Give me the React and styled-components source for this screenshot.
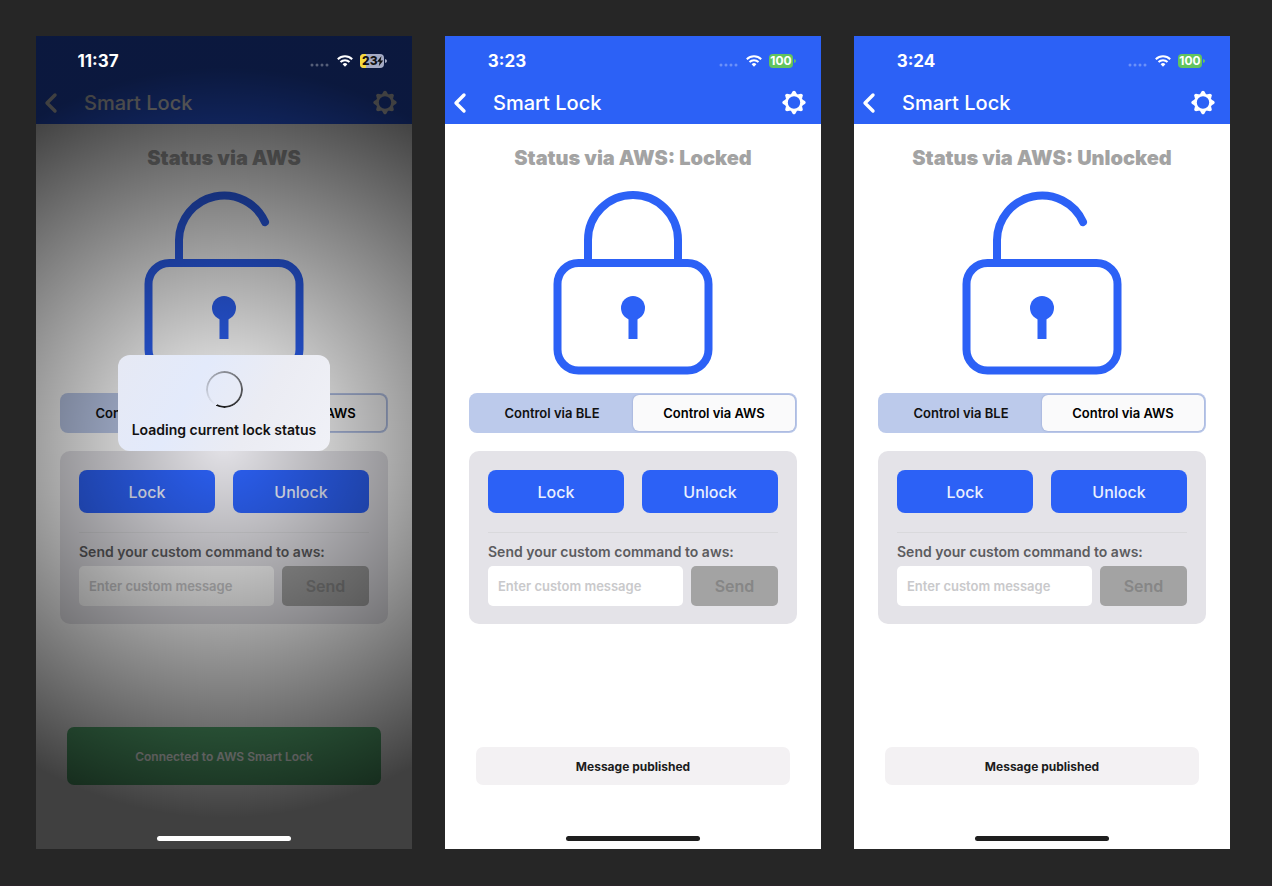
import styled, { createGlobalStyle, css } from "styled-components";

const GlobalStyle = createGlobalStyle`
  * {
    box-sizing: border-box;
  }

  body {
    margin: 0;
    background-color: #262626;
    font-family: Inter, "Liberation Sans", sans-serif;
  }

  button,
  input {
    font-family: inherit;
    margin: 0;
  }
`;

const Board = styled.main`
  display: grid;
  grid-template-columns: repeat(3, minmax(0, 1fr));
  gap: 33px;
  min-height: 100vh;
  padding: 36px 42px 36px 36px;
  border-bottom: 1px solid #2b2429;
`;

const Phone = styled.section`
  position: relative;
  display: flex;
  flex-direction: column;
  overflow: hidden;
  background-color: #fff;
`;

const Header = styled.header`
  background-color: #2c61f6;
  color: #fff;
`;

const StatusBar = styled.div`
  position: relative;
  z-index: 2;
  display: flex;
  align-items: center;
  justify-content: space-between;
  height: 46px;
  padding: 4px 25px 0 0;
`;

const Time = styled.time`
  width: 124px;
  font-size: 17px;
  font-weight: 700;
  text-align: center;
`;

const StatusIcons = styled.div`
  display: flex;
  align-items: center;
  gap: 7px;
`;

const SignalDots = styled.svg`
  width: 20px;
  height: 12px;
  opacity: 0.3;
`;

const WifiIcon = styled.svg`
  width: 16px;
  height: 12px;
`;

const BatteryIcon = styled.svg`
  width: 27px;
  height: 14px;
`;

const NavBar = styled.div`
  display: flex;
  align-items: center;
  height: 42px;
  padding: 0 14px 0 5px;
`;

const IconButton = styled.button`
  display: flex;
  padding: 0;
  border: 0;
  background: none;
  color: inherit;
`;

const NavTitle = styled.h1`
  flex: 1;
  margin: 0;
  padding-left: 23px;
  font-size: 20px;
  font-weight: 500;
  line-height: 24px;
`;

const Content = styled.div`
  display: flex;
  flex: 1;
  flex-direction: column;
  padding: 22px 24px 8px;
`;

const StatusTitle = styled.h2`
  margin: 0 0 21px;
  color: #a3a3a3;
  font-size: 20px;
  font-weight: 900;
  line-height: 24px;
  text-align: center;
`;

const LockDrawing = styled.svg`
  align-self: center;
  width: 160px;
  height: 184px;
  margin-bottom: 18px;
`;

const Segments = styled.div`
  display: grid;
  grid-template-columns: 1fr 1fr;
  height: 40px;
  margin-bottom: 18px;
  padding: 2px;
  border-radius: 8px;
  background-color: #bccaeb;
`;

const Segment = styled.button`
  padding: 0;
  border: 0;
  border-radius: 6px;
  background: none;
  color: #111;
  font-size: 13px;
  font-weight: 600;

  ${(props) =>
    props.$active &&
    css`
      background-color: #fafafb;
      box-shadow: 0 0 2px rgba(60, 80, 150, 0.4);
      color: #000;
    `}
`;

const Panel = styled.form`
  padding: 19px 19px 18px;
  border-radius: 10px;
  background-color: #e4e3e8;
`;

const LockButtons = styled.div`
  display: grid;
  grid-template-columns: 1fr 1fr;
  gap: 18px;
  padding-bottom: 19px;
  border-bottom: 1px solid #d9d9dc;
`;

const ActionButton = styled.button`
  height: 43px;
  padding: 0;
  border: 0;
  border-radius: 8px;
  background-color: #2c61f6;
  color: #e9effe;
  font-size: 16px;
  font-weight: 500;
`;

const CommandLabel = styled.label`
  display: block;
  padding: 9px 0 5px;
  color: #5c5c5f;
  font-size: 14px;
  font-weight: 600;
  line-height: 19px;
`;

const CommandRow = styled.div`
  display: flex;
  gap: 8px;
`;

const CommandInput = styled.input`
  flex: 1;
  min-width: 0;
  height: 40px;
  padding: 0 10px;
  border: 0;
  border-radius: 5px;
  background-color: #fff;
  font-size: 13px;
  font-weight: 600;

  &::placeholder {
    color: #c9c9cb;
    opacity: 1;
  }
`;

const SendButton = styled.button`
  width: 87px;
  height: 40px;
  padding: 0;
  border: 0;
  border-radius: 5px;
  background-color: #a3a3a3;
  color: #868686;
  font-size: 16px;
  font-weight: 600;
`;

const Toast = styled.div`
  display: flex;
  align-items: center;
  justify-content: center;
  height: ${(props) => (props.$connected ? "58px" : "38px")};
  margin: auto 7px 51px;
  border-radius: 7px;
  background-color: ${(props) => (props.$connected ? "#5bb578" : "#f3f1f3")};
  color: ${(props) => (props.$connected ? "#fff" : "#1c1c1c")};
  font-size: 12px;
  font-weight: ${(props) => (props.$connected ? 600 : 700)};
`;

const HomeIndicator = styled.div`
  position: relative;
  z-index: 2;
  align-self: center;
  width: 134px;
  height: 5px;
  border-radius: 3px;
  background-color: ${(props) => (props.$light ? "#fff" : "#1e1e1e")};
`;

const Overlay = styled.div`
  position: absolute;
  inset: 0;
  z-index: 1;
  display: flex;
  align-items: center;
  justify-content: center;
  padding-bottom: 79px;
  background: radial-gradient(
    circle 375px at center,
    rgba(0, 0, 0, 0),
    rgba(0, 0, 0, 0.75)
  );
`;

const Hud = styled.div`
  display: flex;
  flex-direction: column;
  align-items: center;
  justify-content: space-between;
  width: 212px;
  height: 96px;
  padding: 16px 0 11px;
  border-radius: 12px;
  background: linear-gradient(120deg, #e6e9f4, #e3eafb 35%, #ebecf3 65%, #f0f1f7);
  color: #111;
  font-size: 14px;
  font-weight: 600;
  line-height: 20px;
  white-space: nowrap;
`;

const Spinner = styled.div`
  width: 37px;
  height: 37px;
  border-radius: 50%;
  background: conic-gradient(from 208deg, rgba(0, 0, 0, 0), #111);
  mask: radial-gradient(circle, transparent 16px, #000 17px);
`;

const Battery = ({ level, charging }) => (
  <BatteryIcon viewBox="0 0 27 14" aria-label={`Battery ${level}`}>
    {charging ? (
      <>
        <rect width="24" height="14" rx="4" fill="#a5abc4" />
        <path d="M4 0h2v14H4a4 4 0 0 1-4-4V4a4 4 0 0 1 4-4z" fill="#f6d93c" />
        <path d="M25 5q2 .5 2 2t-2 2z" fill="#a5abc4" />
        <text x="2" y="11" fontSize="12" fontWeight="800" fill="#111">
          {level}
        </text>
        <path d="M21.5 2 17 7.8h2.6l-.8 4.4 4.4-5.8h-2.6z" fill="#111" />
      </>
    ) : (
      <>
        <rect width="24" height="14" rx="4" fill="#62c45e" />
        <path d="M25 5q2 .5 2 2t-2 2z" fill="#62c45e" />
        <text
          x="12"
          y="11"
          fontSize="12"
          fontWeight="700"
          fill="#fff"
          textAnchor="middle"
        >
          {level}
        </text>
      </>
    )}
  </BatteryIcon>
);

const Wifi = () => (
  <WifiIcon viewBox="0 0 16 12" fill="none" stroke="#fff" strokeWidth="2">
    <path d="M.8 4.2a10.2 10.2 0 0 1 14.4 0" />
    <path d="M3.5 7a6.4 6.4 0 0 1 9 0" />
    <path d="M5.6 9.2a3.4 3.4 0 0 1 4.8 0L8 11.8z" fill="#fff" stroke="none" />
  </WifiIcon>
);

const BackIcon = () => (
  <svg width="20" height="22" viewBox="0 0 20 22" fill="none">
    <path
      d="M14 3 6 11l8 8"
      stroke="currentColor"
      strokeWidth="3.4"
      strokeLinecap="round"
      strokeLinejoin="round"
    />
  </svg>
);

const TEETH = [0, 45, 90, 135, 180, 225, 270, 315];

const GearIcon = () => (
  <svg width="26" height="26" viewBox="-13 -12.5 26 26">
    <circle r="7.6" fill="none" stroke="currentColor" strokeWidth="2.8" />
    {TEETH.map((angle) => (
      <path
        key={angle}
        d="M-3.2-8 -1.3-11.2Q0-12.3 1.3-11.2L3.2-8z"
        fill="currentColor"
        transform={`rotate(${angle})`}
      />
    ))}
  </svg>
);

const Padlock = ({ locked }) => (
  <LockDrawing
    viewBox="0 0 160 184"
    fill="none"
    stroke="#2c61f6"
    strokeWidth="8"
    strokeLinecap="round"
  >
    {locked ? (
      <path d="M35 70V49a45 45 0 0 1 90 0v21" />
    ) : (
      <path d="M35 70V49A45 45 0 0 1 121 31" />
    )}
    <rect x="4.5" y="72" width="151" height="107.5" rx="21" />
    <circle cx="80" cy="117" r="12" fill="#2c61f6" stroke="none" />
    <path d="M75.5 120h9v28h-9z" fill="#2c61f6" stroke="none" />
  </LockDrawing>
);

const LockScreen = ({
  id,
  time,
  battery,
  charging,
  status,
  locked,
  toast,
  connected,
  loading,
}) => (
  <Phone>
    <Header>
      <StatusBar>
        <Time>{time}</Time>
        <StatusIcons>
          <SignalDots viewBox="0 0 20 12" fill="#fff">
            <circle cx="2" cy="10" r="1.5" />
            <circle cx="7" cy="10" r="1.5" />
            <circle cx="12" cy="10" r="1.5" />
            <circle cx="17" cy="10" r="1.5" />
          </SignalDots>
          <Wifi />
          <Battery level={battery} charging={charging} />
        </StatusIcons>
      </StatusBar>
      <NavBar>
        <IconButton type="button" aria-label="Back">
          <BackIcon />
        </IconButton>
        <NavTitle>Smart Lock</NavTitle>
        <IconButton type="button" aria-label="Settings">
          <GearIcon />
        </IconButton>
      </NavBar>
    </Header>
    <Content>
      <StatusTitle>{status}</StatusTitle>
      <Padlock locked={locked} />
      <Segments>
        <Segment type="button" aria-pressed="false">
          Control via BLE
        </Segment>
        <Segment type="button" aria-pressed="true" $active>
          Control via AWS
        </Segment>
      </Segments>
      <Panel onSubmit={(e) => e.preventDefault()}>
        <LockButtons>
          <ActionButton type="button">Lock</ActionButton>
          <ActionButton type="button">Unlock</ActionButton>
        </LockButtons>
        <CommandLabel htmlFor={`command-${id}`}>
          Send your custom command to aws:
        </CommandLabel>
        <CommandRow>
          <CommandInput
            id={`command-${id}`}
            type="text"
            placeholder="Enter custom message"
          />
          <SendButton type="submit" disabled>
            Send
          </SendButton>
        </CommandRow>
      </Panel>
      <Toast role="status" $connected={connected}>
        {toast}
      </Toast>
      <HomeIndicator $light={loading} />
    </Content>
    {loading ? (
      <Overlay>
        <Hud>
          <Spinner />
          Loading current lock status
        </Hud>
      </Overlay>
    ) : null}
  </Phone>
);

const screens = [
  {
    id: "loading",
    time: "11:37",
    battery: "23",
    charging: true,
    status: "Status via AWS",
    locked: false,
    toast: "Connected to AWS Smart Lock",
    connected: true,
    loading: true,
  },
  {
    id: "locked",
    time: "3:23",
    battery: "100",
    status: "Status via AWS: Locked",
    locked: true,
    toast: "Message published",
  },
  {
    id: "unlocked",
    time: "3:24",
    battery: "100",
    status: "Status via AWS: Unlocked",
    locked: false,
    toast: "Message published",
  },
];

const App = () => (
  <>
    <GlobalStyle />
    <Board>
      {screens.map((screen) => (
        <LockScreen key={screen.id} {...screen} />
      ))}
    </Board>
  </>
);

export default App;
